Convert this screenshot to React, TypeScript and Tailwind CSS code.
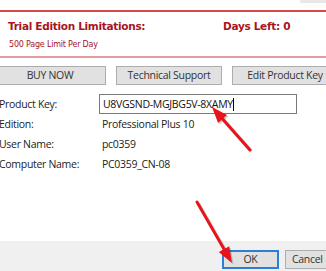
import React from "react";

function Arrow({ x1, y1, x2, y2 }: { x1: number; y1: number; x2: number; y2: number }) {
  const ang = Math.atan2(y2 - y1, x2 - x1);
  const len = 16;
  const w = 6;
  const bx = x2 - len * Math.cos(ang);
  const by = y2 - len * Math.sin(ang);
  const px = -Math.sin(ang) * w;
  const py = Math.cos(ang) * w;
  const sx = x2 - (len - 3) * Math.cos(ang);
  const sy = y2 - (len - 3) * Math.sin(ang);
  return (
    <g>
      <line x1={x1 + 1.5} y1={y1 + 1.5} x2={sx + 1.5} y2={sy + 1.5} stroke="rgba(0,0,0,0.18)" strokeWidth={3.5} />
      <polygon points={`${x2 + 1.5},${y2 + 1.5} ${bx + px + 1.5},${by + py + 1.5} ${bx - px + 1.5},${by - py + 1.5}`} fill="rgba(0,0,0,0.18)" />
      <line x1={x1} y1={y1} x2={sx} y2={sy} stroke="#e8141c" strokeWidth={3} strokeLinecap="round" />
      <polygon points={`${x2},${y2} ${bx + px},${by + py} ${bx - px},${by - py}`} fill="#e8141c" />
    </g>
  );
}

export default function App() {
  const tahoma = { fontFamily: '"DejaVu Sans", Verdana, sans-serif' };
  return (
    <div className="relative w-[326px] h-[271px] bg-white overflow-hidden" style={{ fontFamily: '"Open Sans", "Noto Sans", sans-serif' }}>
      <div className="absolute right-0 top-0 w-[26px] h-[3px] bg-[#e8e8e8]" />
      <div className="pt-[10px]">
        <div className="border-t-2 border-b-2 border-t-[#d94848] border-b-[#e89a9a] h-[48px] px-[8px] pt-[7px]" style={tahoma}>
          <div className="flex text-[10.5px] font-bold text-[#a8141c] leading-[14px]">
            <span className="w-[215px] tracking-[-0.3px]">Trial Edition Limitations:</span>
            <span className="tracking-[-0.3px]">Days Left: 0</span>
          </div>
          <div className="mt-[6px] ml-[1px] text-[8px] text-[#a8141c] leading-[11px] tracking-[-0.2px]">500 Page Limit Per Day</div>
        </div>
      </div>
      <div className="flex mt-[8px] gap-[10px] ml-[-6px] text-[10.5px] tracking-[-0.3px] text-[#333]">
        <div className="w-[112px] h-[19px] shrink-0 border border-[#adadad] bg-[#e1e1e1] flex items-center justify-center">BUY NOW</div>
        <div className="w-[106px] h-[19px] shrink-0 border border-[#adadad] bg-[#e1e1e1] flex items-center justify-center">Technical Support</div>
        <div className="w-[106px] h-[19px] shrink-0 border border-[#adadad] bg-[#e1e1e1] flex items-center justify-center">Edit Product Key</div>
      </div>
      <div className="mt-[9px] text-[10.5px] tracking-[-0.3px] text-[#222] leading-[20px]">
        <div className="flex items-center h-[20px]">
          <span className="w-[100px] ml-[-1px] shrink-0">Product Key:</span>
          <div className="w-[198px] h-[20px] shrink-0 border border-[#7a7a7a] bg-white flex items-center pl-[3px] text-[#111]">U8VGSND-MGJBG5V-8XAMY<span className="inline-block w-[1px] h-[13px] bg-black" /></div>
        </div>
        <div className="flex h-[20px]"><span className="w-[103px] ml-[-1px] shrink-0">Edition:</span><span>Professional Plus 10</span></div>
        <div className="flex h-[20px]"><span className="w-[103px] ml-[-1px] shrink-0">User Name:</span><span>pc0359</span></div>
        <div className="flex h-[20px]"><span className="w-[103px] ml-[-1px] shrink-0">Computer Name:</span><span>PC0359_CN-08</span></div>
      </div>
      <div className="absolute left-0 right-0 bottom-0 h-[30px] bg-[#f0f0f0] flex items-start pt-[9px] pl-[222px] gap-[6px] text-[10.5px] tracking-[-0.3px] text-[#333]">
        <div className="w-[57px] h-[19px] shrink-0 border-2 border-[#2d7fd6] bg-[#e1e1e1] flex items-center justify-center">OK</div>
        <div className="w-[60px] h-[19px] shrink-0 border border-[#adadad] bg-[#e1e1e1] flex items-center pl-[6px]">Cancel</div>
      </div>
      <svg className="absolute inset-0" width={326} height={271}>
        <Arrow x1={250} y1={150} x2={212} y2={107} />
        <Arrow x1={197} y1={202} x2={232} y2={263} />
      </svg>
    </div>
  );
}
